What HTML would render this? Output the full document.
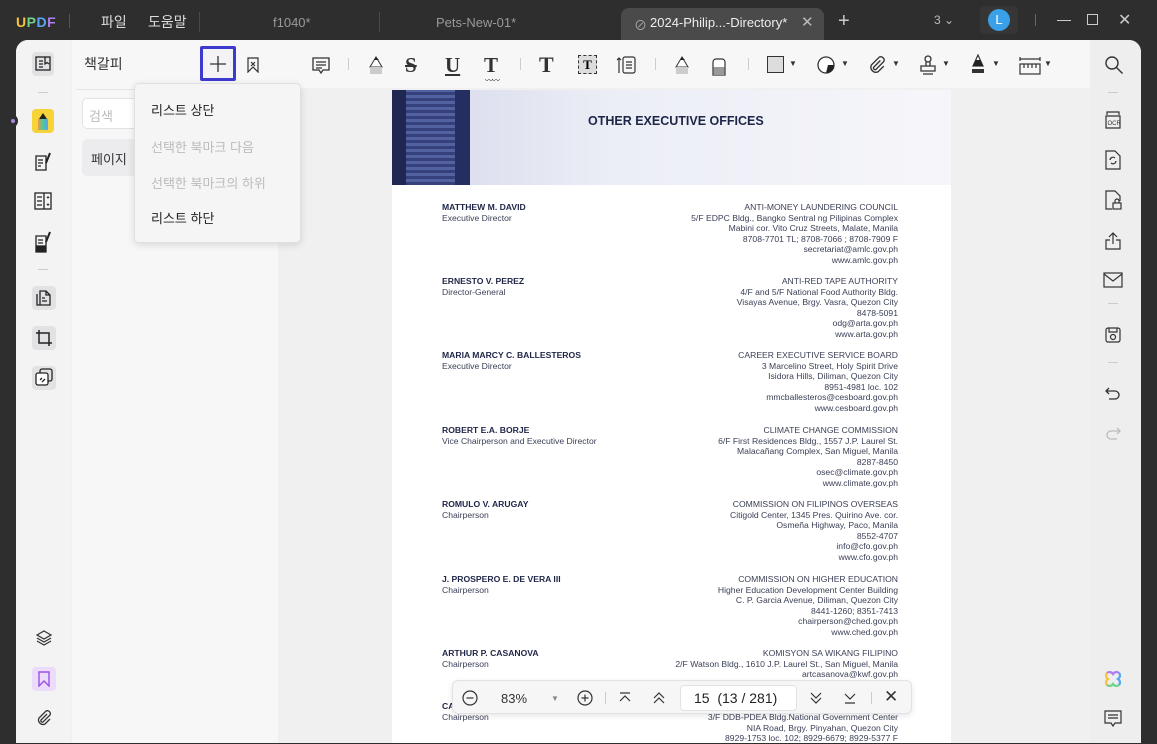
<!DOCTYPE html>
<html><head><meta charset="utf-8">
<style>
*{margin:0;padding:0;box-sizing:border-box}
body{width:1157px;height:743px;overflow:hidden;background:#2e2e2e;font-family:"Liberation Sans","Noto Sans CJK KR",sans-serif;position:relative}
.a{position:absolute}
.tb{color:#ddd;font-size:14px}
.doc{font-size:8.6px;line-height:10.6px;color:#3a3f55}
.nm{position:absolute;left:442px;width:250px}
.nm b{color:#1f2547;font-weight:bold}
.rt{position:absolute;right:259px;width:300px;text-align:right}
.side svg{position:absolute}
</style></head><body>
<!-- title bar -->
<div class="a" style="left:16px;top:14px;font-weight:bold;font-size:14px;letter-spacing:0.5px"><span style="color:#f7c33c">U</span><span style="color:#6fd38a">P</span><span style="color:#59a6f5">D</span><span style="color:#b07df0">F</span></div>
<div class="a" style="left:69px;top:14px;width:1px;height:14px;background:#555"></div>
<div class="a tb" style="left:101px;top:12px">파일</div>
<div class="a tb" style="left:148px;top:12px">도움말</div>
<div class="a" style="left:199px;top:12px;width:1px;height:20px;background:#4a4a4a"></div>
<div class="a" style="left:273px;top:15px;color:#999;font-size:13px">f1040*</div>
<div class="a" style="left:379px;top:12px;width:1px;height:20px;background:#4a4a4a"></div>
<div class="a" style="left:436px;top:15px;color:#999;font-size:13px">Pets-New-01*</div>
<div class="a" style="left:621px;top:8px;width:203px;height:32px;background:#4a4a4a;border-radius:8px 8px 0 0"></div>
<div class="a" style="left:634px;top:15px;color:#aaa;font-size:13px">⊘</div>
<div class="a" style="left:650px;top:15px;color:#eee;font-size:13px">2024-Philip...-Directory*</div>
<div class="a" style="left:801px;top:13px;color:#bbb;font-size:15px">✕</div>
<div class="a" style="left:838px;top:10px;color:#ccc;font-size:20px;font-weight:300">+</div>
<div class="a" style="left:934px;top:13px;color:#bbb;font-size:12px">3 ⌄</div>
<div class="a" style="left:980px;top:6px;width:38px;height:28px;background:#363636;border-radius:5px"></div>
<div class="a" style="left:988px;top:9px;width:22px;height:22px;border-radius:50%;background:#3aa0e8;color:#fff;font-size:13px;text-align:center;line-height:22px">L</div>
<div class="a" style="left:1035px;top:14px;width:1px;height:12px;background:#666"></div>
<div class="a" style="left:1057px;top:20px;width:14px;height:1px;background:#ccc"></div>
<div class="a" style="left:1087px;top:14px;width:11px;height:11px;border:1px solid #ccc"></div>
<div class="a" style="left:1118px;top:10px;color:#ccc;font-size:16px">✕</div>

<!-- main window -->
<div class="a" style="left:16px;top:40px;width:1125px;height:703px;background:#f0f0f1;border-radius:12px 12px 0 0;overflow:hidden">
 <div class="a" style="left:0;top:0;width:55px;height:703px;background:#f3f3f4"></div>
 <div class="a" style="left:56px;top:0;width:206px;height:703px;background:#f7f7f8"></div>
 <div class="a" style="left:262px;top:0;width:812px;height:48px;background:#f7f7f8"></div>
 <div class="a" style="left:1074px;top:0;width:51px;height:703px;background:#eeeeef"></div>
</div>
<div class="a" style="left:8px;top:114px;width:10px;height:14px;background:#2e2e2e;border-radius:0 8px 8px 0"></div>
<div class="a" style="left:11px;top:119px;width:4px;height:4px;border-radius:50%;background:#a58be0"></div>

<!-- left bar icons -->
<div class="side">
<div class="a" style="left:32px;top:52px;width:22px;height:24px;background:#e2e2e4;border-radius:4px"></div>
<svg style="left:35px;top:56px" width="16" height="16" viewBox="0 0 16 16" fill="none" stroke="#222" stroke-width="1.3"><rect x="1" y="1" width="14" height="13"/><path d="M4 5h4M4 8h4M4 11h4M10 1v7l2-1.5 2 1.5"/></svg>
<div class="a" style="left:38px;top:92px;width:10px;height:1px;background:#ccc"></div>
<div class="a" style="left:32px;top:109px;width:22px;height:24px;background:#f7d33a;border-radius:4px"></div>
<svg style="left:35px;top:111px" width="16" height="20" viewBox="0 0 16 20"><path d="M4 8 L8 2 L12 8 Z" fill="#222"/><rect x="3" y="8" width="10" height="11" fill="url(#rb)"/><defs><linearGradient id="rb"><stop offset="0" stop-color="#e94"/><stop offset=".5" stop-color="#4c9"/><stop offset="1" stop-color="#69f"/></linearGradient></defs></svg>
<svg style="left:34px;top:152px" width="18" height="20" viewBox="0 0 18 20" fill="none" stroke="#222" stroke-width="1.3"><path d="M2 4h10v14H2z M4 8h5M4 11h5M4 14h3"/><path d="M16 1l-4 10" stroke-width="2"/></svg>
<svg style="left:34px;top:192px" width="18" height="18" viewBox="0 0 18 18" fill="none" stroke="#222" stroke-width="1.3"><rect x="1" y="1" width="16" height="16"/><path d="M10 1v16M3 5h5M3 9h5M3 13h5M13 6l1-1 1 1M13 12l1 1 1-1"/></svg>
<svg style="left:34px;top:231px" width="18" height="22" viewBox="0 0 18 22" fill="none" stroke="#222" stroke-width="1.3"><path d="M2 5h10v16H2z M4 9h5M4 12h5"/><rect x="3" y="15" width="8" height="5" fill="#222"/><path d="M16 1l-4 10" stroke-width="2"/></svg>
<div class="a" style="left:38px;top:269px;width:10px;height:1px;background:#ccc"></div>
<div class="a" style="left:32px;top:286px;width:24px;height:24px;background:#e2e2e4;border-radius:4px"></div>
<svg style="left:36px;top:290px" width="16" height="16" viewBox="0 0 16 16" fill="none" stroke="#222" stroke-width="1.3"><path d="M4 1h6l4 4v10H4z M1 4v11h3M10 1v4h4M6 8h3M6 11h5"/></svg>
<div class="a" style="left:32px;top:326px;width:24px;height:24px;background:#e2e2e4;border-radius:4px"></div>
<svg style="left:35px;top:329px" width="18" height="18" viewBox="0 0 18 18" fill="none" stroke="#222" stroke-width="1.5"><path d="M4 1v13h13M1 4h13v13"/></svg>
<div class="a" style="left:32px;top:366px;width:24px;height:24px;background:#e2e2e4;border-radius:4px"></div>
<svg style="left:35px;top:368px" width="18" height="18" viewBox="0 0 18 18" fill="none" stroke="#222" stroke-width="1.3"><rect x="5" y="1" width="12" height="12" rx="2"/><rect x="1" y="5" width="12" height="12" rx="2" fill="#fff"/><path d="M5 12l2-2M7 14l3-3"/></svg>
<svg style="left:35px;top:629px" width="18" height="18" viewBox="0 0 18 18" fill="none" stroke="#333" stroke-width="1.2"><path d="M9 2l7 4-7 4-7-4z M2 9l7 4 7-4 M2 12l7 4 7-4"/></svg>
<div class="a" style="left:32px;top:667px;width:24px;height:24px;background:#eadcfa;border-radius:4px"></div>
<svg style="left:38px;top:671px" width="12" height="16" viewBox="0 0 12 16" fill="none" stroke="#9c52e0" stroke-width="1.4"><path d="M1 1h10v14l-5-5-5 5z"/></svg>
<svg style="left:36px;top:710px" width="16" height="16" viewBox="0 0 16 16" fill="none" stroke="#333" stroke-width="1.3"><path d="M11 4l-6 6a1.5 1.5 0 002 2l7-7a3 3 0 00-4-4l-7 7a4.5 4.5 0 006 6l5-5"/></svg>
</div>

<!-- bookmark panel -->
<div class="a" style="left:84px;top:54px;font-size:14px;color:#333">책갈피</div>
<div class="a" style="left:200px;top:46px;width:36px;height:35px;border:3px solid #3d3ad0;border-radius:2px;background:#f3f3f5"></div>
<svg class="a" style="left:209px;top:55px" width="18" height="18" viewBox="0 0 18 18" stroke="#333" stroke-width="1.3"><path d="M9 1v16M1 9h16"/></svg>
<svg class="a" style="left:247px;top:57px" width="12" height="16" viewBox="0 0 12 16" fill="none" stroke="#333" stroke-width="1.2"><path d="M1 1h10v14l-5-5-5 5z M4 5l4 4M8 5l-4 4"/></svg>
<div class="a" style="left:76px;top:89px;width:190px;height:1px;background:#e4e4e6"></div>
<div class="a" style="left:82px;top:98px;width:60px;height:31px;background:#fff;border:1px solid #e2e2e4;border-radius:5px"></div>
<div class="a" style="left:89px;top:106px;font-size:13px;color:#bbb">검색</div>
<div class="a" style="left:82px;top:139px;width:60px;height:37px;background:#ececee;border-radius:5px"></div>
<div class="a" style="left:91px;top:149px;font-size:13px;color:#333">페이지</div>
<!-- dropdown -->
<div class="a" style="left:134px;top:83px;width:167px;height:160px;background:#f5f5f6;border:1px solid #e0e0e2;border-radius:5px;box-shadow:0 2px 8px rgba(0,0,0,.12)"></div>
<div class="a" style="left:151px;top:100px;font-size:13px;color:#222">리스트 상단</div>
<div class="a" style="left:151px;top:137px;font-size:13px;color:#bbb">선택한 북마크 다음</div>
<div class="a" style="left:151px;top:173px;font-size:13px;color:#bbb">선택한 북마크의 하위</div>
<div class="a" style="left:151px;top:208px;font-size:13px;color:#222">리스트 하단</div>

<!-- toolbar -->
<svg class="a" style="left:311px;top:56px" width="20" height="20" viewBox="0 0 20 20" fill="none" stroke="#333" stroke-width="1.3"><path d="M2 2h16v12h-6l-2 3-2-3H2z M5 6h10M5 9h10M5 12h6"/></svg>
<div class="a" style="left:348px;top:58px;width:1px;height:12px;background:#ccc"></div>
<svg class="a" style="left:367px;top:55px" width="18" height="20" viewBox="0 0 18 20"><path d="M3 12L9 2l6 10z" fill="#fff" stroke="#333"/><path d="M7 5l2-3 3 3z" fill="#222"/><rect x="3" y="12" width="12" height="7" fill="#ccc"/></svg>
<div class="a" style="left:405px;top:53px;font-size:21px;font-family:'Liberation Serif';font-weight:bold;color:#333;text-decoration:line-through">S</div>
<div class="a" style="left:445px;top:53px;font-size:21px;font-family:'Liberation Serif';font-weight:bold;color:#333;text-decoration:underline">U</div>
<div class="a" style="left:484px;top:53px;font-size:21px;font-family:'Liberation Serif';font-weight:bold;color:#333">T</div>
<div class="a" style="left:485px;top:75px;font-size:8px;color:#333;letter-spacing:-1px">〰〰</div>
<div class="a" style="left:520px;top:58px;width:1px;height:12px;background:#ccc"></div>
<div class="a" style="left:539px;top:52px;font-size:22px;font-family:'Liberation Serif';font-weight:bold;color:#333">T</div>
<div class="a" style="left:578px;top:55px;width:19px;height:19px;border:1px dashed #333;background:#ddd;font-family:'Liberation Serif';font-weight:bold;font-size:13px;text-align:center;line-height:17px">T</div>
<svg class="a" style="left:615px;top:55px" width="22" height="20" viewBox="0 0 22 20" fill="none" stroke="#333" stroke-width="1.2"><rect x="8" y="2" width="12" height="16" rx="2"/><path d="M11 7h6M11 10h6M11 13h6M4 18V3M2 5l2-2 2 2"/></svg>
<div class="a" style="left:655px;top:58px;width:1px;height:12px;background:#ccc"></div>
<svg class="a" style="left:673px;top:55px" width="18" height="20" viewBox="0 0 18 20"><path d="M3 12L9 2l6 10z" fill="#fff" stroke="#333"/><path d="M7 5l2-3 3 3z" fill="#222"/><rect x="3" y="12" width="12" height="7" fill="#ccc"/></svg>
<svg class="a" style="left:710px;top:56px" width="18" height="20" viewBox="0 0 18 20"><path d="M3 19V6a3 3 0 013-3h6a3 3 0 013 3v13z" fill="#fff" stroke="#333" stroke-width="1.2"/><rect x="3.6" y="11" width="10.8" height="8" fill="#999"/></svg>
<div class="a" style="left:748px;top:58px;width:1px;height:12px;background:#ccc"></div>
<div class="a" style="left:767px;top:56px;width:17px;height:17px;border:1.3px solid #333;background:#ddd"></div>
<div class="a" style="left:789px;top:59px;font-size:8px;color:#333">▼</div>
<svg class="a" style="left:816px;top:55px" width="20" height="20" viewBox="0 0 20 20"><circle cx="10" cy="10" r="8" fill="#fff" stroke="#333" stroke-width="1.3"/><path d="M10 18a8 8 0 008-8h-6l-2 8z" fill="#222"/></svg>
<div class="a" style="left:841px;top:59px;font-size:8px;color:#333">▼</div>
<svg class="a" style="left:868px;top:55px" width="18" height="20" viewBox="0 0 16 16" fill="none" stroke="#333" stroke-width="1.2"><path d="M11 4l-6 6a1.5 1.5 0 002 2l7-7a3 3 0 00-4-4l-7 7a4.5 4.5 0 006 6l5-5"/></svg>
<div class="a" style="left:892px;top:59px;font-size:8px;color:#333">▼</div>
<svg class="a" style="left:918px;top:54px" width="20" height="22" viewBox="0 0 20 22" fill="none" stroke="#333" stroke-width="1.3"><circle cx="10" cy="5" r="3"/><path d="M8 8v4M12 8v4M3 12h14v5H3zM5 20h10"/></svg>
<div class="a" style="left:942px;top:59px;font-size:8px;color:#333">▼</div>
<svg class="a" style="left:970px;top:54px" width="16" height="22" viewBox="0 0 16 22"><path d="M8 1L3 12h10z" fill="#fff" stroke="#333" stroke-width="1.2"/><path d="M6 6h4l3 6H3z" fill="#222"/><rect x="2" y="15" width="12" height="4" fill="#333"/></svg>
<div class="a" style="left:992px;top:59px;font-size:8px;color:#333">▼</div>
<svg class="a" style="left:1018px;top:56px" width="24" height="20" viewBox="0 0 24 20" fill="none" stroke="#333" stroke-width="1.2"><path d="M2 3h20M2 1v4M22 1v4"/><rect x="2" y="8" width="20" height="10"/><path d="M6 8v4M10 8v4M14 8v4M18 8v4"/></svg>
<div class="a" style="left:1044px;top:59px;font-size:8px;color:#333">▼</div>

<!-- right bar -->
<svg class="a" style="left:1104px;top:55px" width="20" height="20" viewBox="0 0 20 20" fill="none" stroke="#333" stroke-width="1.4"><circle cx="8" cy="8" r="6"/><path d="M12.5 12.5l6 6"/></svg>
<div class="a" style="left:1108px;top:92px;width:10px;height:1px;background:#ccc"></div>
<svg class="a" style="left:1104px;top:110px" width="18" height="20" viewBox="0 0 18 20" fill="none" stroke="#333" stroke-width="1.2"><path d="M3 5V2h12v3M2 6h14v12H2z"/><text x="3.5" y="15" font-size="6" fill="#333" stroke="none" font-family="Liberation Sans">OCR</text></svg>
<svg class="a" style="left:1104px;top:150px" width="18" height="20" viewBox="0 0 18 20" fill="none" stroke="#333" stroke-width="1.2"><path d="M2 1h9l5 5v13H2z M6 10a3 3 0 015-2M12 11a3 3 0 01-5 2"/></svg>
<svg class="a" style="left:1104px;top:190px" width="18" height="20" viewBox="0 0 18 20" fill="none" stroke="#333" stroke-width="1.2"><path d="M8 19H2V1h9l5 5v5"/><rect x="9" y="13" width="8" height="6"/><path d="M11 13v-2a2 2 0 014 0v2"/></svg>
<svg class="a" style="left:1104px;top:232px" width="18" height="18" viewBox="0 0 18 18" fill="none" stroke="#333" stroke-width="1.2"><path d="M9 12V1M5 5l4-4 4 4M6 8H2v9h14V8h-4"/></svg>
<svg class="a" style="left:1103px;top:272px" width="20" height="16" viewBox="0 0 20 16" fill="none" stroke="#333" stroke-width="1.2"><rect x="1" y="1" width="18" height="14"/><path d="M1 2l9 7 9-7"/></svg>
<div class="a" style="left:1108px;top:303px;width:10px;height:1px;background:#ccc"></div>
<svg class="a" style="left:1104px;top:326px" width="18" height="18" viewBox="0 0 18 18" fill="none" stroke="#333" stroke-width="1.2"><rect x="2" y="2" width="14" height="14" rx="2"/><path d="M5 2v4h8V2"/><circle cx="9" cy="11" r="2.5"/></svg>
<div class="a" style="left:1108px;top:362px;width:10px;height:1px;background:#ccc"></div>
<svg class="a" style="left:1105px;top:386px" width="16" height="16" viewBox="0 0 16 16" fill="none" stroke="#333" stroke-width="1.3"><path d="M4 2L1 5l3 3M1 5h9a4 4 0 010 8H4"/></svg>
<svg class="a" style="left:1105px;top:426px" width="16" height="16" viewBox="0 0 16 16" fill="none" stroke="#bbb" stroke-width="1.3"><path d="M12 2l3 3-3 3M15 5H6a4 4 0 000 8h6"/></svg>
<svg class="a" style="left:1103px;top:669px" width="20" height="20" viewBox="0 0 20 20" fill="none" stroke-width="2.2"><path d="M4 4a4 4 0 016 1 4 4 0 016-1" stroke="#b07df0"/><path d="M16 4a4 4 0 01-1 6 4 4 0 011 6" stroke="#59a6f5"/><path d="M16 16a4 4 0 01-6-1 4 4 0 01-6 1" stroke="#6fd38a"/><path d="M4 16a4 4 0 011-6 4 4 0 01-1-6" stroke="#f7c33c"/></svg>
<svg class="a" style="left:1104px;top:710px" width="18" height="18" viewBox="0 0 18 18" fill="none" stroke="#333" stroke-width="1.2"><path d="M1 1h16v12h-6l-2 3-2-3H1z M4 5h10M4 8h10"/></svg>

<!-- page -->
<div class="a" style="left:392px;top:90px;width:559px;height:653px;background:#fff;overflow:hidden">
 <div class="a" style="left:0;top:0;width:559px;height:95px;background:linear-gradient(90deg,#d5d8ea,#eceef6 40%,#f6f6fa)"></div>
 <div class="a" style="left:0;top:0;width:78px;height:95px;background:repeating-linear-gradient(0deg,#36407a 0 3px,#5262a0 3px 6px)"></div>
 <div class="a" style="left:0;top:0;width:14px;height:95px;background:#1f2752"></div>
 <div class="a" style="left:63px;top:0;width:15px;height:95px;background:#252e60"></div>
 <div class="a" style="left:196px;top:24px;font-size:12.5px;font-weight:bold;color:#1f2547">OTHER EXECUTIVE OFFICES</div>
</div>

<div class="doc">
<div class="nm" style="top:202px"><b>MATTHEW M. DAVID</b><br>Executive Director</div>
<div class="rt" style="top:202px">ANTI-MONEY LAUNDERING COUNCIL<br>5/F EDPC Bldg., Bangko Sentral ng Pilipinas Complex<br>Mabini cor. Vito Cruz Streets, Malate, Manila<br>8708-7701 TL; 8708-7066 ; 8708-7909 F<br>secretariat@amlc.gov.ph<br>www.amlc.gov.ph</div>
<div class="nm" style="top:276px"><b>ERNESTO V. PEREZ</b><br>Director-General</div>
<div class="rt" style="top:276px">ANTI-RED TAPE AUTHORITY<br>4/F and 5/F National Food Authority Bldg.<br>Visayas Avenue, Brgy. Vasra, Quezon City<br>8478-5091<br>odg@arta.gov.ph<br>www.arta.gov.ph</div>
<div class="nm" style="top:350px"><b>MARIA MARCY C. BALLESTEROS</b><br>Executive Director</div>
<div class="rt" style="top:350px">CAREER EXECUTIVE SERVICE BOARD<br>3 Marcelino Street, Holy Spirit Drive<br>Isidora Hills, Diliman, Quezon City<br>8951-4981 loc. 102<br>mmcballesteros@cesboard.gov.ph<br>www.cesboard.gov.ph</div>
<div class="nm" style="top:425px"><b>ROBERT E.A. BORJE</b><br>Vice Chairperson and Executive Director</div>
<div class="rt" style="top:425px">CLIMATE CHANGE COMMISSION<br>6/F First Residences Bldg., 1557 J.P. Laurel St.<br>Malacañang Complex, San Miguel, Manila<br>8287-8450<br>osec@climate.gov.ph<br>www.climate.gov.ph</div>
<div class="nm" style="top:499px"><b>ROMULO V. ARUGAY</b><br>Chairperson</div>
<div class="rt" style="top:499px">COMMISSION ON FILIPINOS OVERSEAS<br>Citigold Center, 1345 Pres. Quirino Ave. cor.<br>Osmeña Highway, Paco, Manila<br>8552-4707<br>info@cfo.gov.ph<br>www.cfo.gov.ph</div>
<div class="nm" style="top:574px"><b>J. PROSPERO E. DE VERA III</b><br>Chairperson</div>
<div class="rt" style="top:574px">COMMISSION ON HIGHER EDUCATION<br>Higher Education Development Center Building<br>C. P. Garcia Avenue, Diliman, Quezon City<br>8441-1260; 8351-7413<br>chairperson@ched.gov.ph<br>www.ched.gov.ph</div>
<div class="nm" style="top:648px"><b>ARTHUR P. CASANOVA</b><br>Chairperson</div>
<div class="rt" style="top:648px">KOMISYON SA WIKANG FILIPINO<br>2/F Watson Bldg., 1610 J.P. Laurel St., San Miguel, Manila<br>artcasanova@kwf.gov.ph</div>
<div class="nm" style="top:701px"><b>CA</b><br>Chairperson</div>
<div class="rt" style="top:712px">3/F DDB-PDEA Bldg.National Government Center<br>NIA Road, Brgy. Pinyahan, Quezon City<br>8929-1753 loc. 102; 8929-6679; 8929-5377 F</div>
</div>

<!-- zoom bar -->
<div class="a" style="left:452px;top:680px;width:460px;height:34px;background:#f6f6f7;border:1px solid #e2e2e4;border-radius:6px;box-shadow:0 2px 6px rgba(0,0,0,.1)"></div>
<svg class="a" style="left:462px;top:690px" width="16" height="16" viewBox="0 0 16 16" fill="none" stroke="#333" stroke-width="1.2"><circle cx="8" cy="8" r="7"/><path d="M4.5 8h7"/></svg>
<div class="a" style="left:501px;top:691px;font-size:13px;color:#333">83%</div>
<div class="a" style="left:551px;top:694px;font-size:8px;color:#888">▼</div>
<svg class="a" style="left:577px;top:690px" width="16" height="16" viewBox="0 0 16 16" fill="none" stroke="#333" stroke-width="1.2"><circle cx="8" cy="8" r="7"/><path d="M4.5 8h7M8 4.5v7"/></svg>
<div class="a" style="left:605px;top:692px;width:1px;height:12px;background:#ccc"></div>
<svg class="a" style="left:618px;top:692px" width="14" height="12" viewBox="0 0 14 12" fill="none" stroke="#333" stroke-width="1.2"><path d="M2 1h10M2 9l5-5 5 5"/></svg>
<svg class="a" style="left:652px;top:691px" width="14" height="14" viewBox="0 0 14 14" fill="none" stroke="#333" stroke-width="1.2"><path d="M2 7l5-5 5 5M2 12l5-5 5 5"/></svg>
<div class="a" style="left:680px;top:685px;width:117px;height:26px;background:#fff;border:1px solid #e2e2e4;border-radius:4px"></div>
<div class="a" style="left:694px;top:690px;font-size:14px;color:#222">15&nbsp; (13 / 281)</div>
<svg class="a" style="left:809px;top:691px" width="14" height="14" viewBox="0 0 14 14" fill="none" stroke="#333" stroke-width="1.2"><path d="M2 2l5 5 5-5M2 7l5 5 5-5"/></svg>
<svg class="a" style="left:843px;top:692px" width="14" height="12" viewBox="0 0 14 12" fill="none" stroke="#333" stroke-width="1.2"><path d="M2 2l5 5 5-5M2 11h10"/></svg>
<div class="a" style="left:871px;top:692px;width:1px;height:12px;background:#ccc"></div>
<div class="a" style="left:884px;top:687px;font-size:17px;color:#333">✕</div>
</body></html>
